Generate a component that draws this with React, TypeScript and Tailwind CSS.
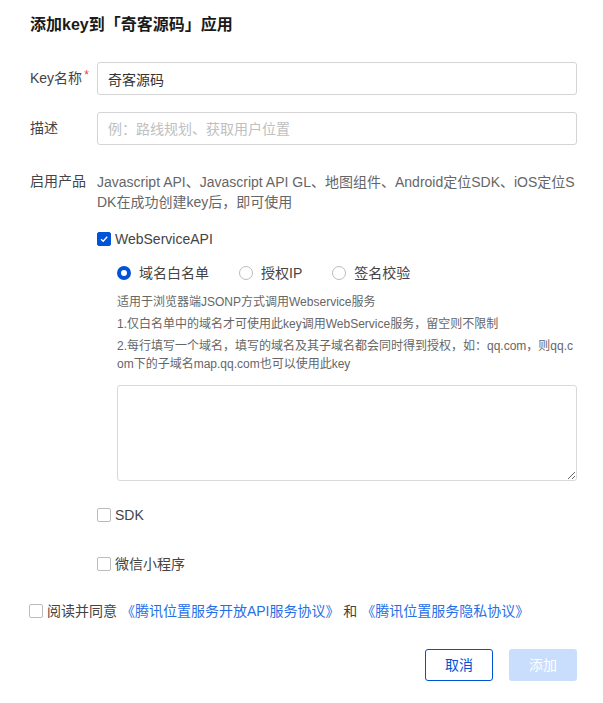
import { useState } from "react"

const font = "font-['Liberation_Sans','Noto_Sans_CJK_SC',sans-serif]"

function Checkbox({ checked, onChange }: { checked: boolean; onChange: () => void }) {
  return (
    <span
      onClick={onChange}
      className={`w-[14px] h-[14px] shrink-0 rounded-[2px] flex items-center justify-center cursor-pointer ${
        checked ? "bg-[#0052d9] border border-[#0052d9]" : "bg-white border border-[#bcbcbc]"
      }`}
    >
      {checked && (
        <svg width="10" height="10" viewBox="0 0 10 10" fill="none">
          <path d="M2 5.2 L4.2 7.3 L8.2 2.8" stroke="white" strokeWidth="1.3" />
        </svg>
      )}
    </span>
  )
}

function Radio({ checked }: { checked: boolean }) {
  return (
    <span
      className={`w-[14px] h-[14px] shrink-0 rounded-full bg-white ${
        checked ? "border-[4px] border-[#0052d9]" : "border border-[#bcbcbc]"
      }`}
    />
  )
}

export default function App() {
  const [web, setWeb] = useState(true)
  const [sdk, setSdk] = useState(false)
  const [mini, setMini] = useState(false)
  const [agree, setAgree] = useState(false)
  const [mode, setMode] = useState(0)
  const modes = ["域名白名单", "授权IP", "签名校验"]

  return (
    <div className={`w-[603px] min-h-[703px] bg-white pl-[30px] pr-[26px] pt-[13px] ${font}`}>
      <h2 className="text-[16px] leading-[24px] font-bold text-[#1a1a1a]">添加key到「奇客源码」应用</h2>

      {/* Key name */}
      <div className="mt-[25px] flex items-center">
        <label className="w-[67px] text-[14px] text-[#444]">
          Key名称<span className="text-[#e54545] text-[12px] align-top relative -top-[2px] ml-[2px]">*</span>
        </label>
        <input
          defaultValue="奇客源码"
          className="flex-1 h-[33px] px-[10px] border border-[#d4d4d4] rounded-[3px] text-[14px] text-[#333] outline-none"
        />
      </div>

      {/* Description */}
      <div className="mt-[17px] flex items-center">
        <label className="w-[67px] text-[14px] text-[#444]">描述</label>
        <input
          placeholder="例：路线规划、获取用户位置"
          className="flex-1 h-[33px] px-[10px] border border-[#d4d4d4] rounded-[3px] text-[14px] text-[#333] placeholder:text-[#c0c0c0] outline-none"
        />
      </div>

      {/* Products */}
      <div className="mt-[27px] flex">
        <label className="w-[67px] shrink-0 text-[14px] leading-[18px] text-[#444]">启用产品</label>
        <div className="flex-1 min-w-0">
          <p className="text-[14px] leading-[20px] text-[#666] break-all">
            Javascript API、Javascript API GL、地图组件、Android定位SDK、iOS定位SDK在成功创建key后，即可使用
          </p>

          <div className="mt-[17px] flex items-center gap-[4px] h-[20px]">
            <Checkbox checked={web} onChange={() => setWeb(!web)} />
            <span className="text-[14px] text-[#444]">WebServiceAPI</span>
          </div>

          <div className="pl-[20px]">
            <div className="mt-[14px] flex items-center gap-[30px] h-[20px]">
              {modes.map((m, i) => (
                <div key={m} className="flex items-center gap-[8px] cursor-pointer" onClick={() => setMode(i)}>
                  <Radio checked={mode === i} />
                  <span className="text-[14px] text-[#444]">{m}</span>
                </div>
              ))}
            </div>

            <div className="mt-[10px] text-[12px] leading-[18px] text-[#666] break-all flex flex-col gap-[4px]">
              <p>适用于浏览器端JSONP方式调用Webservice服务</p>
              <p>1.仅白名单中的域名才可使用此key调用WebService服务，留空则不限制</p>
              <p>2.每行填写一个域名，填写的域名及其子域名都会同时得到授权，如：qq.com，则qq.com下的子域名map.qq.com也可以使用此key</p>
            </div>

            <textarea className="mt-[12px] block w-full h-[96px] border border-[#d9d9d9] rounded-[3px] outline-none p-[8px] text-[12px]" />
          </div>

          <div className="mt-[24px] flex items-center gap-[4px] h-[20px]">
            <Checkbox checked={sdk} onChange={() => setSdk(!sdk)} />
            <span className="text-[14px] text-[#444]">SDK</span>
          </div>

          <div className="mt-[29px] flex items-center gap-[4px] h-[20px]">
            <Checkbox checked={mini} onChange={() => setMini(!mini)} />
            <span className="text-[14px] text-[#444]">微信小程序</span>
          </div>
        </div>
      </div>

      {/* Agreement */}
      <div className="mt-[27px] -ml-[1px] flex items-center gap-[4px] h-[20px] text-[14px]">
        <Checkbox checked={agree} onChange={() => setAgree(!agree)} />
        <span className="text-[#444] whitespace-pre">
          阅读并同意 <a className="text-[#266fe8] cursor-pointer">《腾讯位置服务开放API服务协议》</a> 和 <a className="text-[#266fe8] cursor-pointer">《腾讯位置服务隐私协议》</a>
        </span>
      </div>

      {/* Actions */}
      <div className="mt-[28px] flex justify-end gap-[16px]">
        <button className="w-[68px] h-[32px] border border-[#0052d9] rounded-[3px] text-[14px] text-[#0052d9] bg-white">
          取消
        </button>
        <button disabled className="w-[68px] h-[32px] rounded-[3px] text-[14px] text-white bg-[#c9ddfd]">
          添加
        </button>
      </div>
    </div>
  )
}
